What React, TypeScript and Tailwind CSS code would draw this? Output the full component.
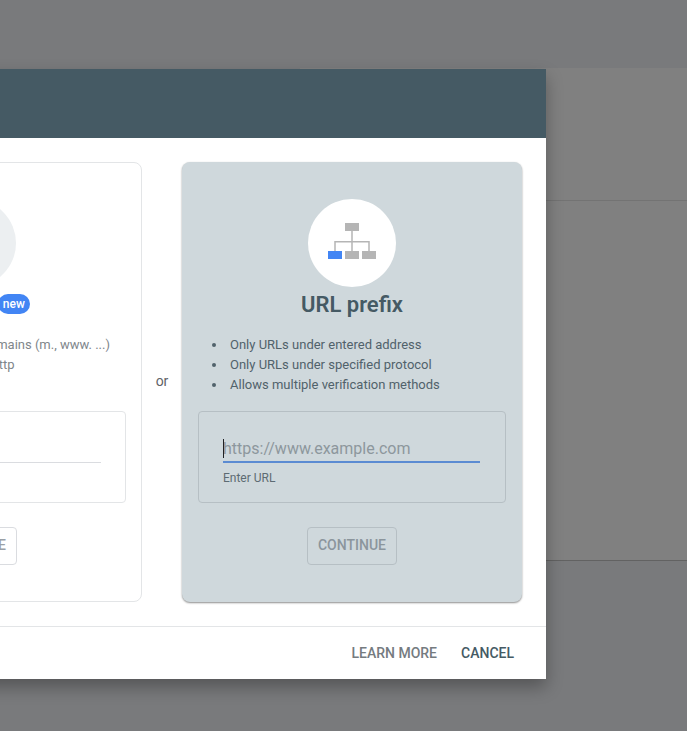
const SitemapIcon = () => (
  <svg width="48" height="36" viewBox="0 0 48 36">
    <rect x="17" y="0" width="14" height="8" fill="#b5b5b5" />
    <path d="M24 8v20M7 28v-9.25h34V28" fill="none" stroke="#b5b5b5" strokeWidth="1.5" />
    <rect x="0" y="28" width="14" height="8" fill="#4285f4" />
    <rect x="17" y="28" width="14" height="8" fill="#b5b5b5" />
    <rect x="34" y="28" width="14" height="8" fill="#b5b5b5" />
  </svg>
);

const Bullet = ({ text, dot }: { text: string; dot: string }) => (
  <li className="flex items-center h-[20px]">
    <span className={`w-[4px] h-[4px] rounded-full mr-[14px] shrink-0 ${dot}`} />
    <span className="whitespace-nowrap">{text}</span>
  </li>
);

const DomainCard = () => (
  <div className="w-[340px] h-[440px] shrink-0 rounded-lg border border-[#e3e5e7] bg-white flex flex-col items-center">
    <div className="mt-[36px] w-[88px] h-[88px] rounded-full bg-[#eceff1]" />
    <div className="mt-[3px] h-[28px] flex items-center gap-2">
      <span className="text-[22px] font-semibold text-[#455a64]">Domain</span>
      <span className="rounded-full bg-[#4285f4] px-[5px] h-[20px] leading-[20px] text-xs font-medium text-white">new</span>
    </div>
    <ul className="mt-[17px] w-full pl-[29px] text-[13px] text-[#80868b]">
      <Bullet dot="bg-[#80868b]" text="All URLs across all subdomains (m., www. ...)" />
      <Bullet dot="bg-[#80868b]" text="All URLs across https or http" />
      <Bullet dot="bg-[#80868b]" text="Requires DNS verification" />
    </ul>
    <div className="mt-[16px] w-[308px] h-[92px] rounded border border-[#e3e5e7] px-[24px] pt-[24px]">
      <div className="h-[27px] border-b border-[#dadce0]" />
    </div>
    <button className="mt-[24px] w-[90px] h-[38px] pb-[2px] rounded-sm border border-[#dadce0] text-sm font-medium text-[#9aa0a6]">CONTINUE</button>
  </div>
);

const UrlCard = () => (
  <div className="w-[340px] h-[440px] shrink-0 rounded-lg bg-[#cfd8dc] shadow-[0_1px_2px_rgba(0,0,0,0.45)] flex flex-col items-center">
    <div className="mt-[37px] w-[88px] h-[88px] rounded-full bg-white flex items-center justify-center pb-[4px]">
      <SitemapIcon />
    </div>
    <div className="mt-[3px] h-[28px] flex items-center">
      <span className="text-[22px] font-semibold text-[#455a64]">URL prefix</span>
    </div>
    <ul className="mt-[17px] w-full pl-[30px] text-[13px] text-[#51626b]">
      <Bullet dot="bg-[#51626b]" text="Only URLs under entered address" />
      <Bullet dot="bg-[#51626b]" text="Only URLs under specified protocol" />
      <Bullet dot="bg-[#51626b]" text="Allows multiple verification methods" />
    </ul>
    <div className="mt-[16px] w-[308px] h-[92px] rounded border border-[#b6bfc4] pl-[24px] pr-[25px] pt-[25px]">
      <div className="relative h-[26px] border-b-2 border-[#5b8bd2] text-base leading-[24px] text-[#8d979d]">
        <span className="absolute left-0 top-[2px] w-px h-[19px] bg-[#202124]" />
        https://www.example.com
      </div>
      <div className="mt-[7px] text-xs text-[#5d6b73]">Enter URL</div>
    </div>
    <button className="mt-[24px] w-[90px] h-[38px] pb-[2px] rounded-sm border border-[#b6bfc4] text-sm font-medium text-[#8b959c]">CONTINUE</button>
  </div>
);

export default function App() {
  return (
    <div className="relative w-[687px] h-[731px] overflow-hidden bg-[#797a7c] font-['Roboto',sans-serif]">
      {/* page behind the scrim */}
      <div className="ml-[300px] mt-[68px] h-[493px] w-[387px] bg-[#808080] border-b border-[#626262]">
        <div className="h-[133px] border-b border-[#737373]" />
      </div>

      <div className="absolute left-[-222px] top-[69px] w-[768px] h-[610px] bg-white flex flex-col shadow-[0_8px_16px_rgba(0,0,0,0.3)]">
        <div className="h-[69px] shrink-0 bg-[#455a64]" />
        <div className="h-[488px] shrink-0 flex pl-[24px] pt-[24px]">
          <DomainCard />
          <div className="w-[40px] h-[440px] flex items-center justify-center text-sm text-[#5f6368] pb-[2px]">or</div>
          <UrlCard />
        </div>
        <div className="flex-1 border-t border-[#e3e5e7] flex items-center justify-end gap-[24px] pr-[32px] text-sm font-medium">
          <span className="text-[#757b7f]">LEARN MORE</span>
          <span className="text-[#455a64]">CANCEL</span>
        </div>
      </div>
    </div>
  );
}
